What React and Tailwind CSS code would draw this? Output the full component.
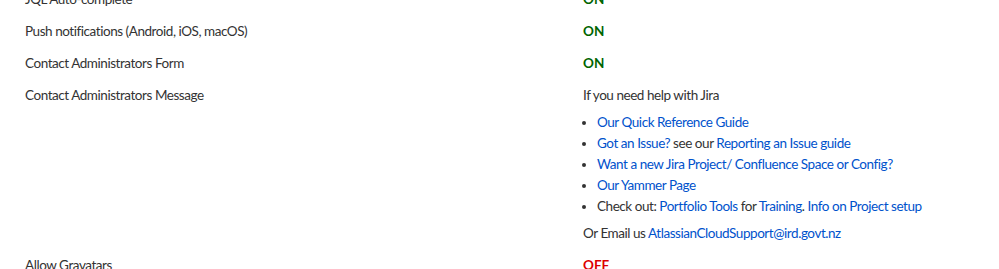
export default function App() {
  const rows = [
    { label: "JQL Auto-complete", value: "ON" },
    { label: "Push notifications (Android, iOS, macOS)", value: "ON" },
    { label: "Contact Administrators Form", value: "ON" },
  ];
  const link = "text-[#0052cc]";

  return (
    <div className="w-[999px] h-[269px] overflow-hidden bg-white font-['Lato',sans-serif] text-[13.5px] tracking-[-0.45px] leading-[20px] text-[#333]">
      <div className="mt-[-17px] pl-[25px]">
        {rows.map((r) => (
          <div key={r.label} className="flex py-[6px]">
            <div className="w-[558px] shrink-0">{r.label}</div>
            <div className="font-bold tracking-normal text-[#006400]">{r.value}</div>
          </div>
        ))}
        <div className="flex py-[6px]">
          <div className="w-[558px] shrink-0">Contact Administrators Message</div>
          <div>
            <p>If you need help with Jira</p>
            <ul className="mt-[7px] list-disc pl-[14px] leading-[21px] marker:text-[#333]">
              <li><a className={link}>Our Quick Reference Guide</a></li>
              <li>
                <a className={link}>Got an Issue?</a> see our <a className={link}>Reporting an Issue guide</a>
              </li>
              <li><a className={link}>Want a new Jira Project/ Confluence Space or Config?</a></li>
              <li><a className={link}>Our Yammer Page</a></li>
              <li>
                Check out: <a className={link}>Portfolio Tools</a> for <a className={link}>Training</a>.{" "}
                <a className={link}>Info on Project setup</a>
              </li>
            </ul>
            <p className="mt-[6px]">
              Or Email us <a className={link}>AtlassianCloudSupport@ird.govt.nz</a>
            </p>
          </div>
        </div>
        <div className="flex py-[6px]">
          <div className="w-[558px] shrink-0">Allow Gravatars</div>
          <div className="font-bold tracking-normal text-[#d00]">OFF</div>
        </div>
      </div>
    </div>
  );
}
